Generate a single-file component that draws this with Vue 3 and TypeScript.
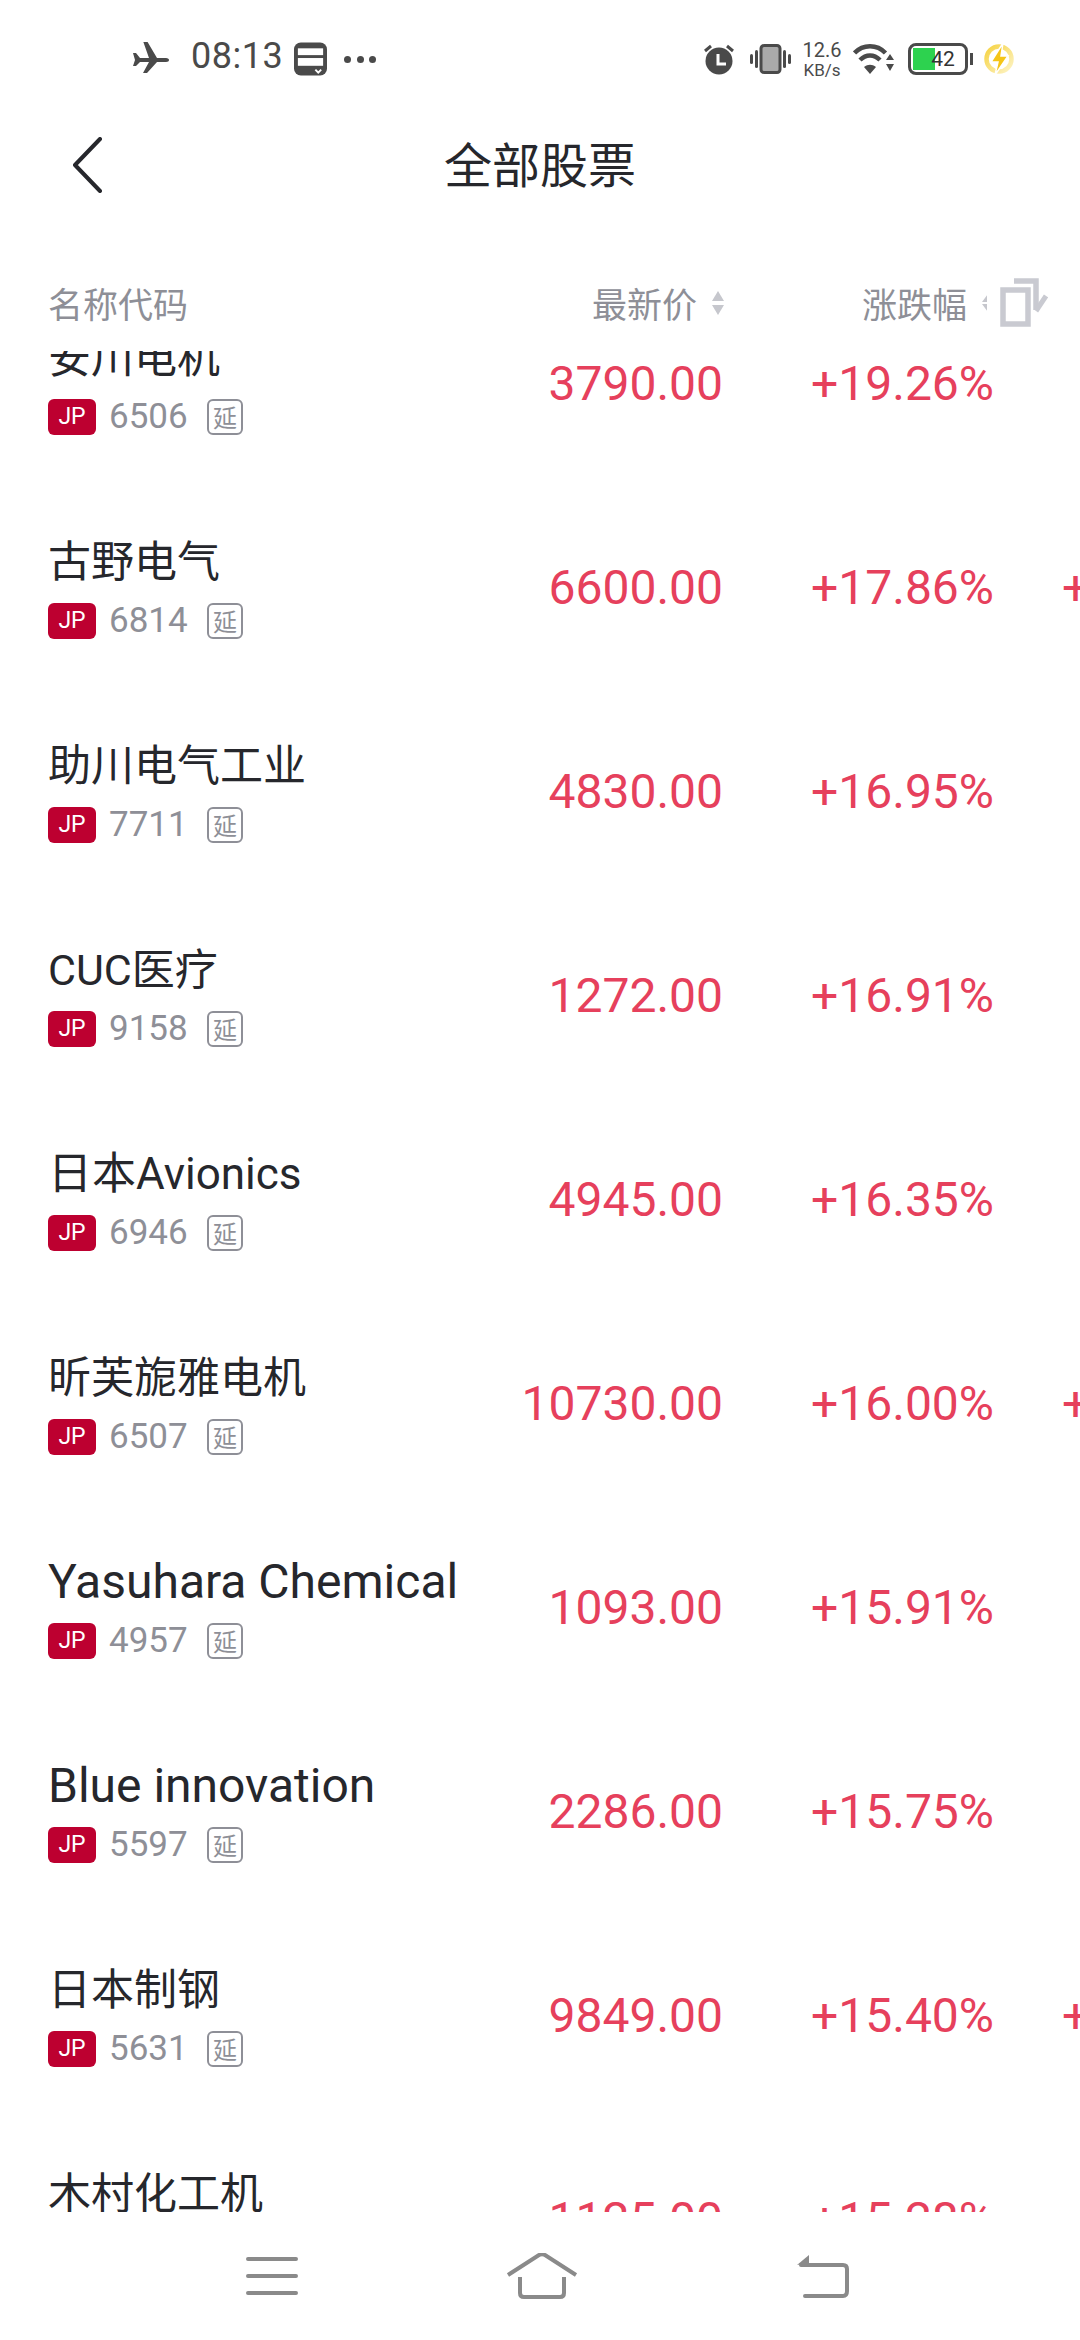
<script setup lang="ts">
interface Row { name: string; code: string; price: string; pct: string; edge: boolean; kind: string }
const rows: Row[] = [
  { name: '安川电机', code: '6506', price: '3790.00', pct: '+19.26%', edge: false, kind: 'cjk' },
  { name: '古野电气', code: '6814', price: '6600.00', pct: '+17.86%', edge: true, kind: 'cjk' },
  { name: '助川电气工业', code: '7711', price: '4830.00', pct: '+16.95%', edge: false, kind: 'cjk' },
  { name: 'CUC医疗', code: '9158', price: '1272.00', pct: '+16.91%', edge: false, kind: 'cjk' },
  { name: '日本Avionics', code: '6946', price: '4945.00', pct: '+16.35%', edge: false, kind: 'mix' },
  { name: '昕芙旎雅电机', code: '6507', price: '10730.00', pct: '+16.00%', edge: true, kind: 'cjk' },
  { name: 'Yasuhara Chemical', code: '4957', price: '1093.00', pct: '+15.91%', edge: false, kind: 'latin' },
  { name: 'Blue innovation', code: '5597', price: '2286.00', pct: '+15.75%', edge: false, kind: 'latin' },
  { name: '日本制钢', code: '5631', price: '9849.00', pct: '+15.40%', edge: true, kind: 'cjk' },
  { name: '木村化工机', code: '6378', price: '1125.00', pct: '+15.28%', edge: false, kind: 'cjk' },
]
</script>

<template>
  <div class="page">
    <div class="status">
      <div class="st-left">
        <svg class="plane" width="38" height="34" viewBox="0 0 38 34"><path d="M1 14l3 0 4 5 9 0-6-17 4 0 10 17 9 0c2 0 3 1 3 2s-1 2-3 2l-9 0-10 11-4 0 6-11-9 0-4 4-3 0 2-6z" fill="#4a4a4a" transform="translate(0,-3)"/></svg>
        <span class="time">08:13</span>
        <svg class="sim" width="33" height="34" viewBox="0 0 34 34"><rect width="34" height="34" rx="7" fill="#4a4a4a"/><rect x="4" y="6" width="26" height="7" fill="#fff"/><rect x="4" y="16" width="26" height="8" fill="#fff"/><path d="M22 28l3 3 3-3" stroke="#fff" stroke-width="2" fill="none"/></svg>
        <span class="dots"><i></i><i></i><i></i></span>
      </div>
      <div class="st-right">
        <svg class="alarm" width="32" height="32" viewBox="0 0 32 32"><circle cx="16" cy="18" r="13.500" fill="#4a4a4a"/><path d="M2 8l6-5M30 8l-6-5" stroke="#4a4a4a" stroke-width="3"/><path d="M15 11v10h8" stroke="#fff" stroke-width="3" fill="none"/></svg>
        <svg class="vib" width="41" height="30" viewBox="0 0 41 30"><rect x="0" y="10" width="3" height="10" rx="1.500" fill="#4a4a4a"/><rect x="5" y="6" width="3" height="18" rx="1.500" fill="#4a4a4a"/><rect x="11" y="1.500" width="19" height="27" rx="3" fill="#aaa" stroke="#4a4a4a" stroke-width="3"/><rect x="33" y="6" width="3" height="18" rx="1.500" fill="#4a4a4a"/><rect x="38" y="10" width="3" height="10" rx="1.500" fill="#4a4a4a"/></svg>
        <div class="speed"><span>12.6</span><span class="unit">KB/s</span></div>
        <svg class="wifi" width="41" height="30" viewBox="0 0 41 30"><path d="M1.500 9C10 0 24 0 32.500 9M7 16C13 10 21 10 27 16" stroke="#4a4a4a" stroke-width="4.500" fill="none"/><path d="M11 23L17 30L23 23C19 20 15 20 11 23z" fill="#4a4a4a"/><path d="M33 16l4-6 4 6zM33 20h8l-4 7z" fill="#4a4a4a"/></svg>
        <div class="battery"><div class="shell"><div class="fill"></div><span>42</span></div><div class="nub"></div></div>
        <svg class="bolt" width="30" height="32" viewBox="0 0 30 32"><defs><linearGradient id="boltRing" x1="0" y1="0" x2="1" y2="1"><stop offset="0" stop-color="#f6d343"/><stop offset="1" stop-color="#fdf3c4"/></linearGradient></defs><circle cx="15" cy="16" r="12.500" fill="none" stroke="url(#boltRing)" stroke-width="4.500"/><path d="M19 0L7 19h7l-3 13 13-19h-7z" fill="#f5c518" stroke="#fff" stroke-width="1.500"/></svg>
      </div>
    </div>

    <div class="nav">
      <svg class="back" width="34" height="56" viewBox="0 0 34 56"><path d="M30 2L5 28l25 26" fill="none" stroke="#26272c" stroke-width="4" stroke-linecap="round" stroke-linejoin="round"/></svg>
      <span class="title">全部股票</span>
    </div>

    <div class="head">
      <span class="h-name">名称代码</span>
      <span class="h-price">最新价<svg class="sort" width="14" height="26" viewBox="0 0 14 26"><path d="M7 1l6 10H1z" fill="#c6c7cd"/><path d="M7 25l6-10H1z" fill="#c6c7cd"/></svg></span>
      <span class="h-pct">涨跌幅</span>
      <svg class="h-more" width="5" height="20" viewBox="0 3 5 20"><path d="M7 4l6 8H1zM7 22l6-8H1z" fill="#c6c7cd" transform="translate(-1,0)"/></svg>
      <svg class="swap" width="48" height="49" viewBox="0 0 48 49"><path d="M3 12h25v34H3z" fill="none" stroke="#c9cad1" stroke-width="5.500"/><path d="M14 3h22v29" fill="none" stroke="#c9cad1" stroke-width="5.500"/><path d="M36 33l10-15" stroke="#c9cad1" stroke-width="5"/></svg>
    </div>

    <div class="list">
      <div class="rows">
        <div v-for="r in rows" :key="r.code" class="row">
          <div class="info">
            <div class="name" :class="r.kind">{{ r.name }}</div>
            <div class="meta">
              <span class="jp">JP</span>
              <span class="code">{{ r.code }}</span>
              <span class="delay">延</span>
            </div>
          </div>
          <div class="price">{{ r.price }}</div>
          <div class="pct">{{ r.pct }}</div>
          <div v-if="r.edge" class="extra">+</div>
        </div>
      </div>
    </div>

    <div class="sysnav">
      <svg width="52" height="40" viewBox="0 0 52 40"><path d="M2 3h48M2 20h48M2 37h48" stroke="#8a8a8a" stroke-width="4" stroke-linecap="round"/></svg>
      <svg width="72" height="46" viewBox="0 0 72 46"><path d="M2 22L33 2c2-1 4-1 6 0l31 20" fill="none" stroke="#8a8a8a" stroke-width="4"/><path d="M14 24v16c0 3 2 4 4 4h36c2 0 4-1 4-4V24" fill="none" stroke="#8a8a8a" stroke-width="4"/></svg>
      <svg width="54" height="44" viewBox="0 0 54 44"><path d="M2 11L14 1v8z" fill="#8a8a8a"/><path d="M6 11h42c3 0 4 2 4 4v22c0 3-1 5-4 5H10" fill="none" stroke="#8a8a8a" stroke-width="4" stroke-linecap="round"/></svg>
    </div>
  </div>
</template>

<style>
html, body { margin: 0; background: #fff; }
</style>

<style scoped>
.page {
  width: 1080px;
  height: 2340px;
  background: #fff;
  display: flex;
  flex-direction: column;
  overflow: hidden;
  font-family: Roboto, "Noto Sans CJK SC", sans-serif;
}
.status {
  height: 118px;
  box-sizing: border-box;
  padding: 40px 66px 0 132px;
  display: flex;
  justify-content: space-between;
  align-items: flex-start;
  color: #4a4a4a;
  flex: none;
}
.st-left { display: flex; align-items: center; height: 38px; }
.plane { margin-right: 21px; }
.time { font-size: 36px; letter-spacing: 0.5px; margin-right: 11px; line-height: 38px; margin-bottom: 6px; }
.dots { display: flex; gap: 5.500px; margin-left: 17px; }
.dots i { width: 7px; height: 7px; border-radius: 50%; background: #4a4a4a; display: block; }
.st-right { display: flex; align-items: center; height: 38px; }
.vib { margin-left: 15px; }
.speed {
  width: 38px; margin-left: 12px;
  display: flex; flex-direction: column; align-items: center;
  font-size: 20px; line-height: 22px;
  white-space: nowrap;
}
.unit { font-size: 17px; line-height: 18px; }
.wifi { margin-left: 12px; }
.battery { display: flex; align-items: center; margin-left: 14px; }
.shell {
  width: 60px; height: 32px; box-sizing: border-box; border: 3px solid #4a4a4a; border-radius: 8px;
  position: relative; display: flex; align-items: center; justify-content: center;
  font-size: 21px; color: #333;
}
.fill { position: absolute; left: 2px; top: 2px; bottom: 2px; width: 22px; background: #2dd24f; }
.shell span { position: relative; margin-left: 10px; }
.nub { width: 3px; height: 12px; background: #4a4a4a; margin-left: 2px; }
.bolt { margin-left: 11px; }

.nav {
  height: 96px;
  position: relative;
  flex: none;
  display: flex;
  align-items: center;
  justify-content: center;
  box-sizing: border-box;
  padding-bottom: 9px;
}
.back { position: absolute; left: 70px; top: 19px; }
.title { font-size: 48px; color: #26272c; }

.head {
  flex: none;
  height: 137px;
  box-sizing: border-box;
  padding: 40px 0 0 48px;
  display: flex;
  align-items: center;
  position: relative;
  font-size: 35px;
  color: #8e8f97;
}
.h-name { width: 544px; }
.h-price { width: 148px; display: flex; align-items: center; white-space: nowrap; }
.sort { margin-left: 14px; flex: none; }
.h-pct { margin-left: 122px; }
.h-more { margin-left: 15px; }
.swap { position: absolute; left: 1000px; top: 64px; }

.list {
  height: 1861px;
  flex: none;
  overflow: hidden;
}
.rows { margin-top: -70px; }
.row {
  height: 204px;
  box-sizing: border-box;
  padding-left: 48px;
  display: flex;
  position: relative;
  align-items: center;
}
.info { width: 450px; flex: none; margin-bottom: 4px; }
.name { line-height: 60px; color: #26272c; white-space: nowrap; }
.name.cjk { font-size: 43px; }
.name.mix { font-size: 44px; }
.name.latin { font-size: 48px; }
.meta { display: flex; align-items: center; height: 36px; margin-top: 11px; }
.jp {
  width: 48px; height: 36px; border-radius: 6px; background: #bd0030; color: #fff;
  font-size: 23px; display: flex; align-items: center; justify-content: center;
}
.code { font-size: 35px; color: #8e8f97; margin-left: 13px; width: 79px; }
.delay {
  width: 32px; height: 32px; margin-left: 19px; border: 2px solid #8e8f97; border-radius: 6px;
  font-size: 24px; color: #8e8f97; display: flex; align-items: center; justify-content: center;
}
.price { width: 225px; text-align: right; font-size: 48px; color: #e6405c; flex: none; }
.pct { width: 271px; text-align: right; font-size: 48px; color: #e6405c; flex: none; }
.extra { position: absolute; left: 1062px; top: 50%; transform: translateY(-50%); font-size: 48px; color: #e6405c; }

.sysnav {
  flex: 1;
  display: flex;
  align-items: center;
  padding-left: 246px;
}
.sysnav svg:nth-child(2) { margin-left: 208px; }
.sysnav svg:nth-child(3) { margin-left: 217px; }
</style>
